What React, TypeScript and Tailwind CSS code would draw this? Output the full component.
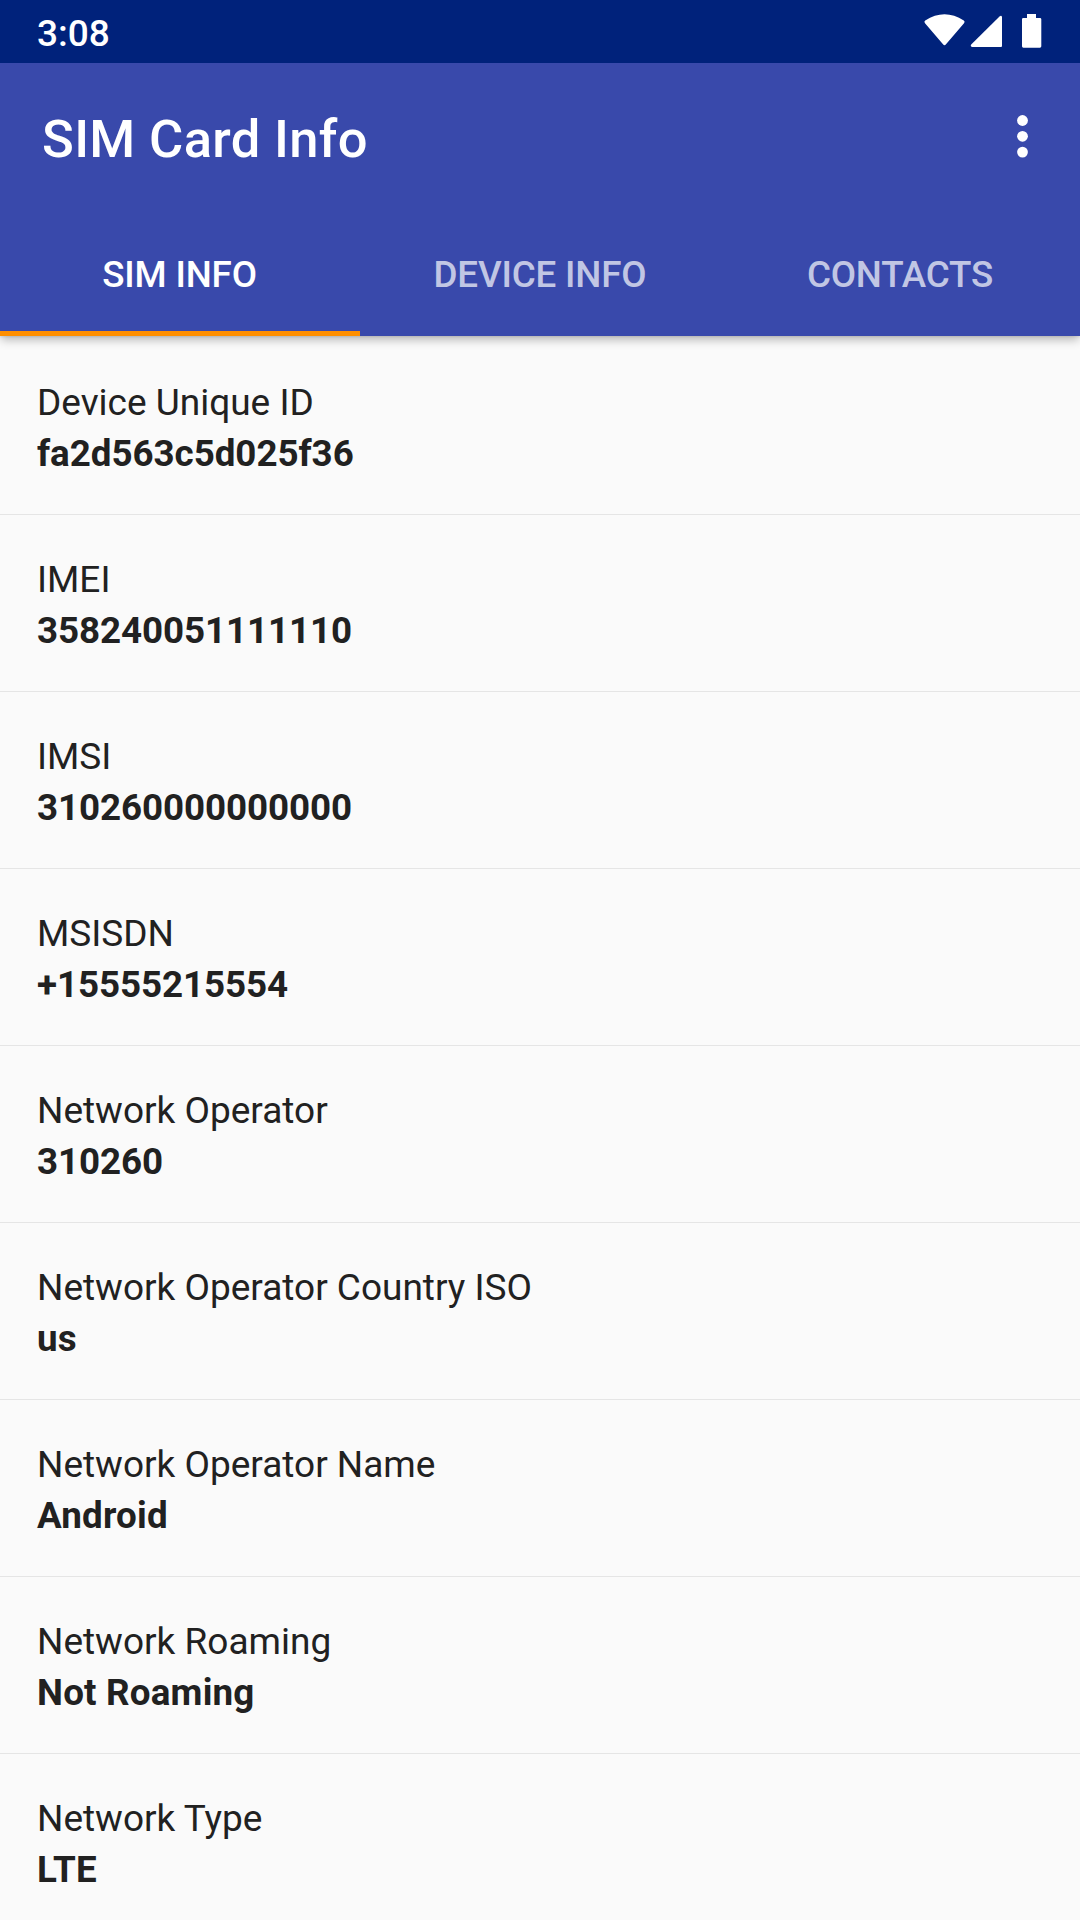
import React from 'react';

const rows = [
  { label: 'Device Unique ID', value: 'fa2d563c5d025f36', tracking: 'tracking-[-0.04px]' },
  { label: 'IMEI', value: '358240051111110', tracking: 'tracking-[-0.09px]' },
  { label: 'IMSI', value: '310260000000000', tracking: 'tracking-[-0.09px]' },
  { label: 'MSISDN', value: '+15555215554', tracking: 'tracking-[-0.09px]' },
  { label: 'Network Operator', value: '310260', tracking: 'tracking-[-0.09px]' },
  { label: 'Network Operator Country ISO', value: 'us', tracking: 'tracking-[0.2px]' },
  { label: 'Network Operator Name', value: 'Android', tracking: 'tracking-[0.2px]' },
  { label: 'Network Roaming', value: 'Not Roaming', tracking: 'tracking-[0.2px]' },
  { label: 'Network Type', value: 'LTE', tracking: 'tracking-[0.2px]' },
];

const tabs = ['SIM INFO', 'DEVICE INFO', 'CONTACTS'];

const StatusBar = () => (
  <div className="relative z-20 h-[63px] bg-[#00227b] flex items-center justify-between px-[37px] text-white">
    <span className="text-[37px] leading-[42px] font-medium pt-[4px]">3:08</span>
    <svg width="120" height="63" viewBox="923 0 120 63" fill="currentColor">
      <path d="M925.2 20.4 Q944.5 8 963.8 20.4 Q965.4 21.5 964 23.3 L946 44.3 Q944.5 46.2 943 44.3 L925 23.3 Q923.6 21.5 925.2 20.4 Z" />
      <path d="M1002 17 V46 Q1002 47 1001 47 H972 Q970 46.5 971.2 44.6 L999.5 16.5 Q1001.5 15 1002 17 Z" />
      <path d="M1027 14 h9 v4 h4 q1.3 0 1.3 1.3 v27 q0 1.4 -1.4 1.4 h-16.5 q-1.4 0 -1.4 -1.4 v-27 q0 -1.3 1.3 -1.3 h3.7 Z" />
    </svg>
  </div>
);

const AppBar = () => (
  <header className="relative z-10 bg-[#3949ab] text-white shadow-[0_5px_9px_-1px_rgba(0,0,0,0.26),0_1px_2px_rgba(0,0,0,0.08)]">
    <div className="h-[147px] flex items-center justify-between pl-[42px] pr-[52px]">
      <h1 className="text-[52.5px] leading-[62px] tracking-[0.35px] font-medium pt-[4px]">SIM Card Info</h1>
      <svg width="11" height="43" viewBox="0 0 11 43" fill="currentColor" className="-mt-px">
        <circle cx="5.5" cy="5.5" r="5.4" />
        <circle cx="5.5" cy="21.3" r="5.4" />
        <circle cx="5.5" cy="37.1" r="5.4" />
      </svg>
    </div>
    <nav className="grid grid-cols-3 h-[126px] text-[36.75px] font-medium tracking-[-0.16px]">
      {tabs.map((tab, i) => (
        <div
          key={tab}
          className={
            i === 0
              ? 'flex items-center justify-center pt-[9px] pr-px border-b-[5px] border-[#ff8f00]'
              : 'flex items-center justify-center pt-[9px] border-b-[5px] border-transparent text-white/70'
          }
        >
          {tab}
        </div>
      ))}
    </nav>
  </header>
);

export default function App() {
  return (
    <div className="w-[1080px] h-[1920px] overflow-hidden bg-[#fafafa] font-[Roboto,sans-serif]">
      <StatusBar />
      <AppBar />
      <main className="pt-[2px]">
        {rows.map((row) => (
          <div key={row.label} className="h-[177px] pt-[39px] pl-[37px] border-b border-[#e5e5e5] leading-[51px] text-[#212121]">
            <div className="text-[37px]">{row.label}</div>
            <div className={`text-[36.75px] font-bold ${row.tracking}`}>{row.value}</div>
          </div>
        ))}
      </main>
    </div>
  );
}
